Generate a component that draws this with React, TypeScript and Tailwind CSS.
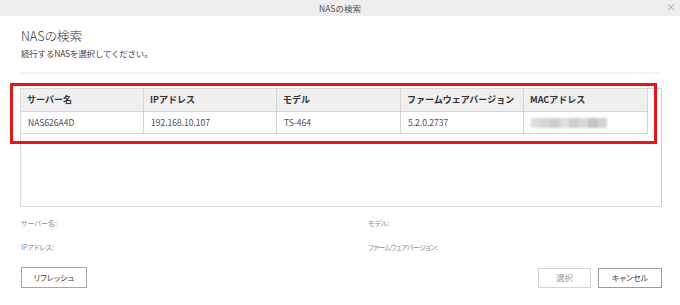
const font = "font-['Noto_Sans_CJK_JP','Noto_Sans',sans-serif]"

const columns = [
  { label: "サーバー名", value: "NAS626A4D", w: "w-[123px]" },
  { label: "IPアドレス", value: "192.168.10.107", w: "w-[133px]" },
  { label: "モデル", value: "TS-464", w: "w-[124px]" },
  { label: "ファームウェアバージョン", value: "5.2.0.2737", w: "w-[123px]" },
  { label: "MACアドレス", value: "", w: "w-[124px]" },
]

// blurred MAC address blocks
const macShades = ["bg-[#dcdcdc]", "bg-[#d6d6d6]", "bg-[#c9ced2]", "bg-[#e0e0e0]", "bg-[#cfcfcf]", "bg-[#d9d9d9]", "bg-[#c4c4c4]", "bg-[#d4d4d4]"]

function MacBlur() {
  return (
    <div className="flex h-[10px] w-[76px] blur-[1px]">
      {macShades.map((c, i) => (
        <div key={i} className={`flex-1 ${c}`} />
      ))}
    </div>
  )
}

export default function App() {
  return (
    <div className={`relative w-[680px] h-[305px] bg-white overflow-hidden ${font}`}>
      {/* window title */}
      <div className="relative h-4 bg-[#eeeeee] flex items-center justify-center text-[8.5px] text-[#555]">
        NASの検索
        <span className="absolute right-[4px] top-[2px] text-[10px] leading-[10px] text-[#aaa]">×</span>
      </div>

      <div className="px-[20px]">
        <h1 className="mt-[10px] ml-[1px] text-[12.5px] leading-[20px] font-light text-[#333]">NASの検索</h1>
        <p className="ml-[1px] text-[8.5px] leading-[14px] text-[#444] tracking-[-0.2px]">続行するNASを選択してください。</p>

        <div className="mt-[12px] h-[2px] w-[640px] bg-[#f3f3f3]" />

        {/* device list */}
        <div className="mt-[14px] h-[119px] w-[642px] border border-[#d9d9d9] border-r-[#cfcfcf]">
          <div className="flex h-[23px] w-[627px] bg-[#efefef] border-b border-[#d6d6d6]">
            {columns.map((c) => (
              <div key={c.label} className={`${c.w} flex items-center pl-[6px] border-r border-[#d6d6d6] text-[9px] font-bold text-[#333]`}>
                {c.label}
              </div>
            ))}
          </div>
          <div className="flex h-[22px] w-[627px] border-b border-[#d6d6d6]">
            {columns.map((c) => (
              <div key={c.label} className={`${c.w} flex items-center pl-[7px] border-r border-[#d6d6d6] text-[8.5px] text-[#4d4d5a]`}>
                {c.value || <MacBlur />}
              </div>
            ))}
          </div>
        </div>

        {/* details */}
        <div className="mt-[10px] ml-[1px] grid grid-cols-[347px_1fr] gap-y-[12px] text-[7px] leading-[12px] text-[#8c8c8c] [font-feature-settings:'palt']">
          <span>サーバー名:</span>
          <span>モデル:</span>
          <span>IPアドレス:</span>
          <span className="tracking-[-0.6px]">ファームウェアバージョン:</span>
        </div>

        <div className="mt-[14px] ml-[1px] flex items-center [font-feature-settings:'palt']">
          <button className="w-[66px] h-[21px] border border-[#a6a6a6] bg-white text-[8px] text-[#444]">リフレッシュ</button>
          <div className="flex-1" />
          <button className="w-[53px] h-[20px] border border-[#d4d4d4] bg-white text-[8.5px] text-[#9a9a9a]">選択</button>
          <button className="ml-[7px] mr-[-2px] w-[64px] h-[20px] border border-[#9c9c9c] bg-white text-[8px] text-[#444]">キャンセル</button>
        </div>
      </div>

      {/* red highlight annotation */}
      <div className="absolute left-[10px] top-[83px] w-[647px] h-[61px] border-[3px] border-[#e8141c] pointer-events-none" />
    </div>
  )
}
